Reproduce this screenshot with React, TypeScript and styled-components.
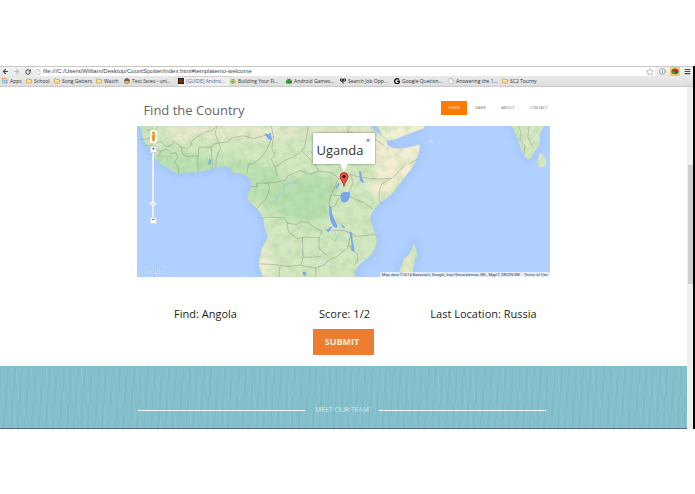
import React, { useState } from "react";
import styled, { createGlobalStyle } from "styled-components";
import { ArrowLeft, ArrowRight, RotateCw, Star, Menu, File, Folder, Info } from "lucide-react";

const GlobalStyle = createGlobalStyle`
  * { box-sizing: border-box; }
  body { margin: 0; background: #fff; font-family: "Open Sans", "Noto Sans", sans-serif; }
  button, input { font-family: inherit; margin: 0; }
  svg { display: block; }
`;

const Screen = styled.div`
  padding: 66px 0;
`;

const BrowserWindow = styled.div`
  border-right: 2px solid #000;
  background: #fff;
`;

const Chrome = styled.header`
  background: linear-gradient(#f4f4f4, #dedede);
  border-bottom: 1px solid #c9c9c9;
`;

const Toolbar = styled.div`
  display: flex;
  align-items: center;
  height: 10px;
  padding: 0 2px;
  gap: 4px;
  border-top: 1px solid #c8c8c8;
`;

const ToolButton = styled.button<{ $tint?: string; $bg?: string }>`
  display: flex;
  align-items: center;
  justify-content: center;
  width: ${(p) => (p.$bg ? "10px" : "7px")};
  height: 9px;
  padding: 0;
  border: 0;
  flex: none;
  color: ${(p) => p.$tint ?? "#444"};
  background: ${(p) => p.$bg ?? "transparent"};
`;

const AddressBar = styled.label`
  flex: 1;
  display: flex;
  align-items: center;
  gap: 2px;
  height: 9px;
  padding: 0 1px 0 0;
  background: #fff;
  color: #999;
`;

const AddressInput = styled.input`
  flex: 1;
  min-width: 0;
  height: 9px;
  padding: 0;
  border: 0;
  outline: 0;
  background: transparent;
  color: #444;
  font-family: "Liberation Sans", Arial, sans-serif;
  font-size: 6px;
  line-height: 9px;
`;

const Bookmarks = styled.nav`
  display: flex;
  align-items: center;
  height: 10px;
  padding-left: 2px;
`;

const Bookmark = styled.a<{ $width: number; $active?: boolean }>`
  display: flex;
  align-items: center;
  gap: 2px;
  width: ${(p) => p.$width}px;
  height: 9px;
  flex: none;
  white-space: nowrap;
  color: ${(p) => (p.$active ? "#4a6a9c" : "#333")};
  background: ${(p) => (p.$active ? "#eeeeee" : "transparent")};
  box-shadow: ${(p) => (p.$active ? "0 0 0 1px #cfcfcf" : "none")};
  font-size: 5px;
  line-height: 9px;
  text-decoration: none;
`;

const Viewport = styled.div`
  display: flex;
`;

const Page = styled.div`
  flex: 1;
  min-width: 0;
`;

const ScrollTrack = styled.div`
  width: 6px;
  padding-top: 78px;
  background: #f0f0f0;
`;

const ScrollThumb = styled.div`
  height: 119px;
  margin-left: 1px;
  background: #cfcfcf;
`;

const Container = styled.div`
  width: 60%;
  margin: 0 auto;
`;

const SiteHeader = styled(Container)`
  display: flex;
  align-items: center;
  justify-content: space-between;
  height: 39px;
  padding: 3px 2px 0 6px;
`;

const SiteTitle = styled.h1`
  margin: 0;
  padding-top: 4px;
  color: #666;
  font-size: 13px;
  line-height: 18px;
  font-weight: 400;
`;

const SiteNav = styled.nav`
  display: flex;
  align-items: center;
  gap: 15px;
`;

const NavLink = styled.a<{ $active?: boolean }>`
  padding: ${(p) => (p.$active ? "0 7px" : "0")};
  margin-right: ${(p) => (p.$active ? "-7px" : "0")};
  background: ${(p) => (p.$active ? "#ff7a00" : "transparent")};
  color: ${(p) => (p.$active ? "#ffe3c8" : "#777")};
  font-size: 4px;
  line-height: 14px;
  font-weight: 400;
  text-decoration: none;
`;

const MapFrame = styled(Container)`
  position: relative;
  height: 151px;
  overflow: hidden;
  background: #b0d0ff;
`;

const MapControls = styled.div`
  position: absolute;
  top: 4px;
  left: 12px;
  display: flex;
  flex-direction: column;
  align-items: center;
  width: 8px;
`;

const Pegman = styled.div`
  width: 7px;
  height: 13px;
  margin-bottom: 3px;
  background: #fff;
  border-radius: 2px;
  opacity: 0.95;
`;

const ZoomButton = styled.button`
  display: flex;
  align-items: center;
  justify-content: center;
  width: 7px;
  height: 7px;
  padding: 0;
  border: 1px solid #d0d6de;
  border-radius: 1px;
  background: #fff;
  color: #444;
  font-size: 6px;
  line-height: 5px;
  font-weight: 700;
`;

const ZoomSlider = styled.input`
  appearance: none;
  writing-mode: vertical-lr;
  width: 8px;
  height: 64px;
  background: linear-gradient(90deg, transparent 3px, #e9f0fb 3px, #e9f0fb 5px, transparent 5px);

  &::-webkit-slider-thumb {
    appearance: none;
    width: 6px;
    height: 3px;
    border: 1px solid #fff;
    border-radius: 1px;
    background: #c6d2e4;
  }
`;

const InfoWindow = styled.div`
  position: absolute;
  top: 7px;
  left: 50%;
  width: 62px;
  height: 31px;
  margin-left: -31px;
  padding: 7px 4px 0;
  background: #fff;
  box-shadow: 0 0 2px rgba(60, 80, 60, 0.7);
  color: #333;
  font-size: 13px;
  line-height: 21px;

  &::after {
    content: "";
    position: absolute;
    top: 30px;
    left: 27px;
    border: 4px solid transparent;
    border-top: 9px solid #fff;
    border-bottom: 0;
  }
`;

const CloseButton = styled.button`
  position: absolute;
  top: 3px;
  right: 3px;
  width: 7px;
  height: 8px;
  padding: 0;
  border: 0;
  background: transparent;
  color: #444;
  font-size: 8px;
  line-height: 8px;
`;

const Pin = styled.div`
  position: absolute;
  top: 46px;
  left: 50%;
  margin-left: -5px;
`;

const MapLogo = styled.div`
  position: absolute;
  left: 3px;
  bottom: 1px;
  color: #f4f8ff;
  font-family: "Liberation Serif", serif;
  font-size: 8px;
  line-height: 9px;
  text-shadow: 0 0 1px #6f87aa;
`;

const Attribution = styled.div`
  position: absolute;
  right: 0;
  bottom: 0;
  display: flex;
  gap: 4px;
  padding: 0 2px;
  background: rgba(240, 244, 250, 0.8);
  color: #444;
  font-family: Roboto, Arial, sans-serif;
  font-size: 4px;
  line-height: 5px;
  white-space: nowrap;

  a { color: inherit; text-decoration: none; }
`;

const Stats = styled.section`
  display: grid;
  grid-template-columns: repeat(3, 1fr);
  width: 61%;
  margin: 0 auto;
  padding: 29px 0 0 2px;
  color: #222;
  font-size: 11px;
  line-height: 16px;
  text-align: center;
  white-space: nowrap;
`;

const SubmitRow = styled.div`
  display: flex;
  justify-content: center;
  padding: 7px 0 11px;
`;

const SubmitButton = styled.button`
  width: 61px;
  height: 26px;
  padding: 0 3px 2px 0;
  border: 0;
  background: #ed7d31;
  color: #f8e9de;
  font-size: 9px;
  font-weight: 700;
`;

const TeamSection = styled.section`
  height: 63px;
  padding-top: 37px;
  border-bottom: 1px solid #4f6f80;
  background-color: #85bfcb;
  background-image:
    repeating-linear-gradient(86deg, rgba(255, 255, 255, 0.05) 0 1px, transparent 1px 5px),
    repeating-linear-gradient(94deg, rgba(30, 100, 125, 0.05) 0 2px, transparent 2px 7px);
`;

const TeamHeading = styled(Container)`
  display: flex;
  align-items: center;
  gap: 10px;
  padding: 0 4px 0 1px;

  &::before, &::after {
    content: "";
    flex: 1;
    height: 1px;
    background: #eefafc;
  }

  h2 {
    margin: 0;
    color: #f3fbfc;
    font-size: 7px;
    line-height: 14px;
    font-weight: 300;
  }
`;

const AppsIcon = () => (
  <svg width="6" height="6" viewBox="0 0 6 6">
    {["#e0776b", "#e09a7b", "#e5b35e", "#75b889", "#6cb7c9", "#8f8fd0", "#9dc77b", "#69a7d8", "#b089c4"].map((c, i) => (
      <rect key={c} x={(i % 3) * 2} y={Math.floor(i / 3) * 2} width="1.5" height="1.5" fill={c} />
    ))}
  </svg>
);
const FolderIcon = () => <Folder size={6} color="#c99d42" fill="#fbe3a1" strokeWidth={3} />;
const FaceIcon = () => (
  <svg width="6" height="6" viewBox="0 0 12 12">
    <circle cx="6" cy="6" r="5.5" fill="#5b4320" />
    <path d="M1 6h10a5 5 0 0 1-10 0Z" fill="#d9a441" />
    <path d="M3 4h2M7 4h2M4 8h4" stroke="#fff" strokeWidth="1.2" />
  </svg>
);
const GuideIcon = () => (
  <svg width="6" height="6" viewBox="0 0 12 12">
    <path d="M0 0h12v12H0z" fill="#2b1a10" />
    <path d="M1 4h10M1 8h10" stroke="#d45a18" strokeWidth="1.5" />
  </svg>
);
const RobotIcon = ({ color, square }: { color: string; square?: boolean }) => (
  <svg width="6" height="6" viewBox="0 0 12 12" fill={color}>
    <path d="M2.5 5a3.5 3.5 0 0 1 7 0ZM2.5 5.5h7V10h-7ZM.5 5.5H2V9H.5ZM10 5.5h1.5V9H10ZM4 10h1.3v2H4ZM6.7 10H8v2H6.7Z" />
    {square && <path d="M0 5h12v6H8V9H4v2H0ZM2 0l2 3-1 1ZM10 0 8 3l1 1Z" />}
  </svg>
);
const SearchJobIcon = () => (
  <svg width="6" height="6" viewBox="0 0 12 12" fill="none" stroke="#333" strokeWidth="2">
    <path d="M1 2h4v4H1ZM7 2h4v4H7ZM6 3v8M3 6l2 3" />
  </svg>
);
const GIcon = () => (
  <svg width="6" height="6" viewBox="0 0 12 12" fill="none" stroke="#111" strokeWidth="2.6">
    <path d="M10 3A5 5 0 1 0 10.5 9V6.5H6.5" />
  </svg>
);
const PageIcon = () => <File size={6} color="#9a9a9a" fill="#fff" strokeWidth={2} />;

const bookmarks = [
  { label: "Apps", width: 24, icon: <AppsIcon /> },
  { label: "School", width: 28, icon: <FolderIcon /> },
  { label: "Song Getters", width: 42, icon: <FolderIcon /> },
  { label: "Watch", width: 28, icon: <FolderIcon /> },
  { label: "Text faces - uni...", width: 54, icon: <FaceIcon /> },
  { label: "[GUIDE] Androi...", width: 52, icon: <GuideIcon />, active: true },
  { label: "Building Your Fi...", width: 56, icon: <RobotIcon color="#91b63c" /> },
  { label: "Android Games...", width: 54, icon: <RobotIcon color="#2f8f2f" square /> },
  { label: "Search Job Opp...", width: 54, icon: <SearchJobIcon /> },
  { label: "Google Quetion...", width: 54, icon: <GIcon /> },
  { label: "Answering the 1...", width: 54, icon: <PageIcon /> },
  { label: "SC2 Tourny", width: 54, icon: <FolderIcon /> },
];

const AFRICA =
  "M0 0L11 8 15 28 24 52 38 68 48 92 60 104 78 121 100 132 124 147 140 141 160 139 186 140 208 133 232 127 264 121 276 126 284 138 291 145 306 144 320 146 334 155 342 167 341 184 336 198 330 214 332 222 345 236 360 249 372 266 379 282 380 300 386 316 391 332 386 346 374 366 370 384 366 402 364 420 370 436 380 456H656L652 436 666 418 686 402 706 384 718 362 720 342 716 327 710 308 704 292 701 277 705 262 711 252 722 240 736 227 756 212 776 192 801 157 821 132 836 108 846 82 849 54 832 60 806 66 784 68 766 66 752 57 748 42 735 30 724 20 712 14 701 0Z";
const ARABIA = "M721 0L730 18 738 36 748 44 770 42 801 30 830 18 861 7 863 0Z";
const MADAGASCAR = "M829 352L836 366 840 392 834 398 829 424 822 456H790L787 436 794 416 800 398 814 388 822 372Z";
const INDIA = "M1124 0L1130 14 1138 30 1146 52 1154 76 1164 92 1172 101 1180 99 1188 88 1194 75 1206 60 1209 42 1206 26 1214 14 1220 0Z";
const LANKA = "M1207 80L1218 87 1226 102 1227 116 1216 126 1205 122 1201 106Z";

const borders = [
  "M12 42L36 38 58 50 72 48 84 60 98 62M30 12L54 16 64 0M26 60L45 58 52 72 72 76 62 94 M72 76L90 70 102 84 116 80 122 96 112 108 124 124 126 146",
  "M104 44L120 54 132 64 153 68 160 60 166 44 188 28 208 18 226 14 240 0M98 62L108 52M184 140L182 104 186 64 M186 64L222 64 224 90 228 130M222 64L234 54 246 52 250 66 238 96 236 126M132 64L136 84 150 92 M150 92L184 90",
  "M240 0L234 24 246 52 M246 52L272 48 286 36 320 30 350 38 394 26 410 34M330 140L334 116 350 112 370 98 390 70 402 42 398 30M410 34L404 68 414 88 402 100 414 124 420 150",
  "M342 182H360V172H392L410 170 M360 182V172M392 170L398 184 392 206 386 222 372 232 360 248M410 170L444 164 452 150 490 134 520 146 546 136 588 142M414 124L444 104 470 92 494 76 514 94 536 118 546 136",
  "M402 0L410 34M514 0L508 36 502 66 494 76M520 78L540 90 574 82 606 80 M606 80L622 52 630 18 642 0M630 18L680 26 704 34 740 58",
  "M588 142L604 158 626 160 640 146 660 152 700 158 724 160 764 158 806 116 M764 158L734 174 726 196 726 224 738 236M640 146L648 170 636 196 M604 158L594 182 584 202M588 208L636 212 680 230 708 250M636 196L636 212",
  "M584 202L576 230 580 246 594 240 604 216M374 276L400 274 442 276 450 292 478 296 494 286 516 292 536 308 554 316 546 336 546 368 570 388 M450 292L454 318 480 338 496 334 498 394 M498 394H536L554 390 M496 334L546 336",
  "M364 414L410 416 456 422 488 418 536 426 564 416 576 402 600 392 612 382 638 360 M638 360L648 374 660 384 662 404 652 418M638 322L660 332 716 326M564 312L590 314 620 314 642 322 632 364M498 394L492 418M536 426L536 456M428 422L426 456",
  "M816 114L842 100M1142 0L1152 20 1148 44 1164 60 1160 86M1176 0L1172 34 1184 58",
];

const WorldMap = () => (
  <svg width="100%" height="151" viewBox="0 0 1236 454" preserveAspectRatio="xMidYMid slice" role="img" aria-label="Map of Africa">
    <defs>
      <filter id="soft" x="-20%" y="-20%" width="140%" height="140%" colorInterpolationFilters="sRGB"><feGaussianBlur stdDeviation="10" /></filter>
      <filter id="terrain" x="0" y="0" width="100%" height="100%" colorInterpolationFilters="sRGB">
        <feTurbulence type="fractalNoise" baseFrequency="0.04" numOctaves="4" seed="8" />
        <feColorMatrix values="0 0 0 0 .58  0 0 0 0 .77  0 0 0 0 .53  1.8 0 0 0 -.7" />
      </filter>
      <clipPath id="land"><path d={AFRICA} /><path d={ARABIA} /><path d={MADAGASCAR} /><path d={INDIA} /><path d={LANKA} /></clipPath>
    </defs>
    <path d="M0 0H1236V456H0Z" fill="#b0d0ff" />
    <g fill="none" stroke="#94b8f6" strokeWidth="20" opacity=".45" filter="url(#soft)">
      <path d={AFRICA} /><path d={MADAGASCAR} /><path d={INDIA} /><path d={ARABIA} />
    </g>
    <g clipPath="url(#land)">
      <path d="M0 0H1236V456H0Z" fill="#d3e8c2" />
      <g filter="url(#soft)">
        <path d="M90 0H720L650 40 510 20 420 45 250 35 110 45Z" fill="#e7e9cd" />
        <path d="M0 65L160 80 250 105 340 110 420 125 440 165 380 220 330 240 270 160 100 160Z" fill="#bce1b3" />
        <path d="M445 160L500 145 590 155 605 190 580 230 570 275 520 295 450 280 400 250 380 200Z" fill="#b8dfb0" />
        <path d="M640 20L760 50 870 40 840 130 730 220 690 190 720 120Z" fill="#f3eed3" />
        <path d="M660 80L720 90 700 140 650 150Z" fill="#d4e6bf" />
        <path d="M364 340L400 360 410 456H360Z" fill="#ebedcf" />
        <path d="M720 0H870V40H740Z" fill="#f6f0d6" />
        <path d="M840 380L800 400 790 456H810Z" fill="#e5eac6" />
        <path d="M1160 10L1190 20 1184 80 1166 70Z" fill="#dfe9c8" />
      </g>
      <path d="M0 0H1236V456H0Z" filter="url(#terrain)" opacity=".4" />
    </g>
    <g fill="none" stroke="#777b78" strokeWidth="1.5" strokeLinejoin="round" opacity=".7">
      {borders.map((d) => <path key={d} d={d} />)}
    </g>
    <g fill="#78a7ef">
      <path d="M612 202L622 198 636 199 640 206 634 224 626 230 614 228 610 216Z" />
      <path d="M576 238L583 244 585 264 592 280 601 300 599 308 589 302 580 284 577 264Z" />
      <path d="M637 318L645 320 646 340 652 370 650 378 643 374 643 352Z" />
      <path d="M382 22L392 26 402 20 400 30 406 38 402 44 392 38Z" />
      <path d="M666 134L672 138 674 156 680 168 677 172 668 162Z" />
      <path d="M594 188L604 170 608 174 600 188ZM612 296L622 302 624 308 616 304ZM568 314L578 304 588 302 580 310 574 320ZM496 438L508 440 506 450 499 449ZM216 100L222 102 220 118 214 114Z" />
    </g>
    <g fill="none" stroke="#94b9ea" strokeWidth="1.5">
      <path d="M414 230L424 210 438 198 442 180 458 172 484 170M560 418L570 404 580 408M592 312L600 334 590 350M320 36L300 44M702 272L698 280 704 288" />
      <path d={AFRICA} opacity=".6" />
    </g>
    <path d="M877 45L884 43 891 46 882 48Z" fill="#edf0d2" />
  </svg>
);

export default function App() {
  const [open, setOpen] = useState(true);
  const [url, setUrl] = useState("file:///C:/Users/William/Desktop/CountSpotter/index.html#templatemo-welcome");
  const [zoom, setZoom] = useState(20);
  const changeZoom = (step: number) => setZoom((z) => Math.max(0, Math.min(100, z + step)));

  return (
    <Screen>
      <GlobalStyle />
      <BrowserWindow>
        <Chrome>
          <Toolbar>
            <ToolButton aria-label="Back"><ArrowLeft size={7} strokeWidth={4} /></ToolButton>
            <ToolButton aria-label="Forward" $tint="#bbb"><ArrowRight size={7} strokeWidth={4} /></ToolButton>
            <ToolButton aria-label="Reload"><RotateCw size={6} strokeWidth={4} /></ToolButton>
            <AddressBar>
              <PageIcon />
              <AddressInput aria-label="Address" value={url} onChange={(e) => setUrl(e.target.value)} />
              <Star size={8} strokeWidth={2} />
            </AddressBar>
            <ToolButton aria-label="Site information" $tint="#999"><Info size={7} strokeWidth={3} /></ToolButton>
            <ToolButton aria-label="Extension" $bg="#f2cb68">
              <svg width="8" height="7" viewBox="0 0 16 14">
                <ellipse cx="8" cy="7" rx="7" ry="5.5" fill="#634b3d" />
                <path d="M8 7 2 3l6-2 5 2Z" fill="#c6372d" />
                <path d="M8 7 1 6l2 5 5 1Z" fill="#4a9b4f" />
              </svg>
            </ToolButton>
            <ToolButton aria-label="Menu"><Menu size={7} strokeWidth={4} /></ToolButton>
          </Toolbar>
          <Bookmarks aria-label="Bookmarks">
            {bookmarks.map((b) => (
              <Bookmark key={b.label} href="#" $width={b.width} $active={b.active}>
                {b.icon}
                {b.label}
              </Bookmark>
            ))}
          </Bookmarks>
        </Chrome>
        <Viewport>
          <Page>
            <SiteHeader as="header">
              <SiteTitle>Find the Country</SiteTitle>
              <SiteNav>
                <NavLink href="#home" $active>HOME</NavLink>
                <NavLink href="#game">GAME</NavLink>
                <NavLink href="#about">ABOUT</NavLink>
                <NavLink href="#contact">CONTACT</NavLink>
              </SiteNav>
            </SiteHeader>
            <MapFrame>
              <WorldMap />
              <MapControls>
                <Pegman>
                  <svg width="7" height="13" viewBox="0 0 14 26">
                    <circle cx="7" cy="6" r="3" fill="#d99416" />
                    <path d="M3 9h8l-1 8-1 6H5l-1-6Z" fill="#f2a51c" />
                    <path d="M7 10v12" stroke="#b87b10" />
                  </svg>
                </Pegman>
                <ZoomButton aria-label="Zoom in" onClick={() => changeZoom(10)}>+</ZoomButton>
                <ZoomSlider
                  type="range"
                  aria-label="Zoom level"
                  value={100 - zoom}
                  onChange={(e) => setZoom(100 - Number(e.target.value))}
                />
                <ZoomButton aria-label="Zoom out" onClick={() => changeZoom(-10)}>−</ZoomButton>
              </MapControls>
              <Pin>
                <svg width="10" height="15" viewBox="0 0 20 30">
                  <path d="M10 29C9 20 2 16 2 9a8 8 0 0 1 16 0c0 7-7 11-8 20Z" fill="#ea4b40" stroke="#a9352d" strokeWidth="1.5" />
                  <circle cx="10" cy="9" r="3" fill="#3c100d" />
                </svg>
              </Pin>
              {open && (
                <InfoWindow>
                  Uganda
                  <CloseButton aria-label="Close" onClick={() => setOpen(false)}>×</CloseButton>
                </InfoWindow>
              )}
              <MapLogo>Google</MapLogo>
              <Attribution>
                <span>Map data ©2014 Basarsoft, Google, Inav/Geosistemas SRL, MapIT, ORION-ME</span>
                <a href="#terms">Terms of Use</a>
              </Attribution>
            </MapFrame>
            <Stats>
              <div>Find: Angola</div>
              <div>Score: 1/2</div>
              <div>Last Location: Russia</div>
            </Stats>
            <SubmitRow>
              <SubmitButton>SUBMIT</SubmitButton>
            </SubmitRow>
            <TeamSection>
              <TeamHeading><h2>MEET OUR TEAM</h2></TeamHeading>
            </TeamSection>
          </Page>
          <ScrollTrack><ScrollThumb /></ScrollTrack>
        </Viewport>
      </BrowserWindow>
    </Screen>
  );
}
